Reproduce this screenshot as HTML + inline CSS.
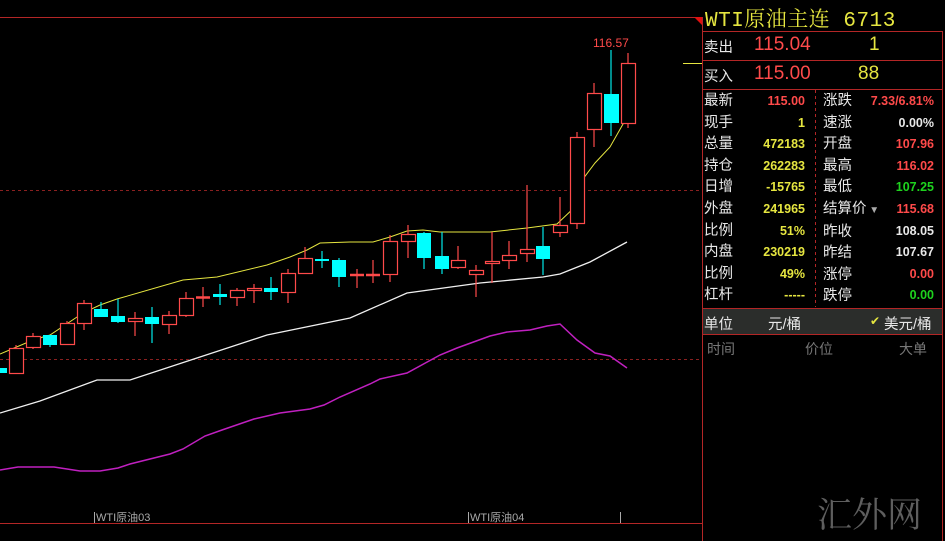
<!DOCTYPE html>
<html><head><meta charset="utf-8"><style>
body{margin:0;background:#000;width:945px;height:541px;overflow:hidden;position:relative;font-family:"Liberation Sans","Noto Sans CJK SC",sans-serif}
.a{position:absolute;white-space:nowrap}
.l{color:#e8e8e8;font-size:14.5px}
.v{font-size:12.5px;font-weight:bold;text-align:right}
.r{color:#ff4a4a}.y{color:#e6e640}.w{color:#e8e8e8}.g{color:#1ed21e}
</style></head><body>
<svg class="a" style="left:0;top:0" width="945" height="541">
<line x1="0" y1="17.5" x2="702" y2="17.5" stroke="#b32626"/>
<line x1="0" y1="523.5" x2="702" y2="523.5" stroke="#b32626"/>
<line x1="702.5" y1="17" x2="702.5" y2="541" stroke="#b32626"/>
<line x1="942.5" y1="31" x2="942.5" y2="541" stroke="#b32626"/>
<polygon points="694,17 702,17 702,25" fill="#e01010"/>
<line x1="0" y1="190.5" x2="702" y2="190.5" stroke="#8a2020" stroke-dasharray="3,3"/>
<line x1="0" y1="359.5" x2="702" y2="359.5" stroke="#8a2020" stroke-dasharray="3,3"/>
<line x1="683" y1="63.5" x2="702" y2="63.5" stroke="#e6e640"/>
<line x1="702" y1="31.5" x2="942" y2="31.5" stroke="#b32626"/>
<line x1="702" y1="60.5" x2="942" y2="60.5" stroke="#b32626"/>
<line x1="702" y1="89.5" x2="942" y2="89.5" stroke="#b32626"/>
<line x1="815.5" y1="90" x2="815.5" y2="307" stroke="#b32626" stroke-dasharray="3,3"/>
<rect x="703" y="309" width="239" height="25" fill="#2b2d2b"/>
<line x1="702" y1="308.5" x2="942" y2="308.5" stroke="#b32626"/>
<line x1="702" y1="334.5" x2="942" y2="334.5" stroke="#b32626"/>
<line x1="94.5" y1="512" x2="94.5" y2="523" stroke="#aaa"/>
<line x1="468.5" y1="512" x2="468.5" y2="523" stroke="#aaa"/>
<line x1="620.5" y1="512" x2="620.5" y2="523" stroke="#aaa"/>
<text x="96" y="521" fill="#aaa" font-size="11" font-family="Liberation Sans,Noto Sans CJK SC,sans-serif">WTI原油03</text>
<text x="470" y="521" fill="#aaa" font-size="11" font-family="Liberation Sans,Noto Sans CJK SC,sans-serif">WTI原油04</text>
<text x="593" y="47" fill="#ff4a4a" font-size="12" font-family="Liberation Sans,sans-serif">116.57</text>
<polyline fill="none" stroke="#f0f0f0" stroke-width="1.3" points="0,413 40,401 97,380 130,380 200,357 267,335 350,318 407,293 480,283 543,277 560,274 590,262 627,242"/>
<polyline fill="none" stroke="#c020c0" stroke-width="1.5" points="0,470 18,467 54,467 80,471 100,471 118,468 130,464 170,454 183,449 205,436 222,430 254,419 280,413 310,409 324,405 340,397 370,384 380,379 407,373 440,355 457,348 490,336 507,332 530,330 547,326 560,324 577,340 595,353 610,356 627,368"/>
<polyline fill="none" stroke="#e6e640" stroke-width="1" points="0,354 33,340 50,335 83,313 100,305 117,299 183,280 217,277 267,265 290,257 307,250 320,243 350,242 373,242 390,237 407,231 423,230 440,232 490,232 527,228 557,224 577,205 580,183 595,163 610,147 627,117"/>
<g stroke="#ff4a4a" fill="#000" stroke-width="1.2">
<line x1="16" y1="345" x2="16" y2="373"/><rect x="9.5" y="348.5" width="14" height="25"/>
<line x1="33" y1="333" x2="33" y2="349"/><rect x="26.5" y="336.5" width="14" height="11"/>
<line x1="67" y1="321" x2="67" y2="344"/><rect x="60.5" y="323.5" width="14" height="21"/>
<line x1="84" y1="300" x2="84" y2="330"/><rect x="77.5" y="303.5" width="14" height="20"/>
<line x1="135" y1="312" x2="135" y2="336"/><rect x="128.5" y="318.5" width="14" height="3"/>
<line x1="169" y1="311" x2="169" y2="334"/><rect x="162.5" y="315.5" width="14" height="9"/>
<line x1="186" y1="292" x2="186" y2="317"/><rect x="179.5" y="298.5" width="14" height="17"/>
<line x1="203" y1="287" x2="203" y2="307"/><line x1="196" y1="297.5" x2="210" y2="297.5" stroke-width="2.5"/>
<line x1="237" y1="288" x2="237" y2="306"/><rect x="230.5" y="290.5" width="14" height="7"/>
<line x1="254" y1="284" x2="254" y2="303"/><rect x="247.5" y="288.5" width="14" height="2"/>
<line x1="288" y1="269" x2="288" y2="303"/><rect x="281.5" y="273.5" width="14" height="19"/>
<line x1="305" y1="247" x2="305" y2="273"/><rect x="298.5" y="258.5" width="14" height="15"/>
<line x1="357" y1="269" x2="357" y2="288"/><line x1="350" y1="275" x2="364" y2="275" stroke-width="2.5"/>
<line x1="373" y1="260" x2="373" y2="283"/><line x1="366" y1="275" x2="380" y2="275" stroke-width="2.5"/>
<line x1="390" y1="235" x2="390" y2="282"/><rect x="383.5" y="241.5" width="14" height="33"/>
<line x1="408" y1="225" x2="408" y2="258"/><rect x="401.5" y="234.5" width="14" height="7"/>
<line x1="458" y1="246" x2="458" y2="269"/><rect x="451.5" y="260.5" width="14" height="7"/>
<line x1="476" y1="265" x2="476" y2="297"/><rect x="469.5" y="270.5" width="14" height="4"/>
<line x1="492" y1="232" x2="492" y2="283"/><rect x="485.5" y="261.5" width="14" height="2"/>
<line x1="509" y1="241" x2="509" y2="269"/><rect x="502.5" y="255.5" width="14" height="5"/>
<line x1="527" y1="185" x2="527" y2="262"/><rect x="520.5" y="249.5" width="14" height="4"/>
<line x1="560" y1="197" x2="560" y2="237"/><rect x="553.5" y="225.5" width="14" height="7"/>
<line x1="577" y1="132" x2="577" y2="229"/><rect x="570.5" y="137.5" width="14" height="86"/>
<line x1="594" y1="83" x2="594" y2="147"/><rect x="587.5" y="93.5" width="14" height="36"/>
<line x1="628" y1="53" x2="628" y2="128"/><rect x="621.5" y="63.5" width="14" height="60"/>
</g>
<g stroke="#00e8e8" fill="#00ffff" stroke-width="1.2">
<rect x="0" y="368" width="7" height="5" stroke="none"/>
<line x1="50" y1="335" x2="50" y2="347"/><rect x="43" y="335" width="14" height="10" stroke="none"/>
<line x1="101" y1="302" x2="101" y2="317"/><rect x="94" y="309" width="14" height="8" stroke="none"/>
<line x1="118" y1="299" x2="118" y2="323"/><rect x="111" y="316" width="14" height="6" stroke="none"/>
<line x1="152" y1="307" x2="152" y2="343"/><rect x="145" y="317" width="14" height="7" stroke="none"/>
<line x1="220" y1="284" x2="220" y2="305"/><rect x="213" y="294" width="14" height="3" stroke="none"/>
<line x1="271" y1="277" x2="271" y2="300"/><rect x="264" y="288" width="14" height="4" stroke="none"/>
<line x1="322" y1="251" x2="322" y2="268"/><rect x="315" y="259" width="14" height="2" stroke="none"/>
<line x1="339" y1="258" x2="339" y2="287"/><rect x="332" y="260" width="14" height="17" stroke="none"/>
<line x1="424" y1="232" x2="424" y2="269"/><rect x="417" y="233" width="14" height="25" stroke="none"/>
<line x1="442" y1="232" x2="442" y2="274"/><rect x="435" y="256" width="14" height="13" stroke="none"/>
<line x1="543" y1="227" x2="543" y2="275"/><rect x="536" y="246" width="14" height="13" stroke="none"/>
<line x1="611" y1="50" x2="611" y2="136"/><rect x="604" y="94" width="15" height="29" stroke="none"/>
</g>
</svg>
<div class="a" style="left:705px;top:3px;color:#e6e640;font-size:21px;font-family:'Liberation Mono','Noto Serif CJK SC',monospace;letter-spacing:0.5px">WTI原油主连 6713</div>
<div class="a l" style="left:704px;top:36px">卖出</div>
<div class="a r" style="left:754px;top:34px;font-size:19px">115.04</div>
<div class="a y" style="left:869px;top:34px;font-size:19px">1</div>
<div class="a l" style="left:704px;top:65px">买入</div>
<div class="a r" style="left:754px;top:63px;font-size:19px">115.00</div>
<div class="a y" style="left:858px;top:63px;font-size:19px">88</div>

<div class="a l" style="left:704px;top:91px;line-height:21.6px">最新<br>现手<br>总量<br>持仓<br>日增<br>外盘<br>比例<br>内盘<br>比例<br>杠杆</div>
<div class="a v" style="right:140px;top:91px;line-height:21.6px"><span class="r">115.00</span><br><span class="y">1</span><br><span class="y">472183</span><br><span class="y">262283</span><br><span class="y">-15765</span><br><span class="y">241965</span><br><span class="y">51%</span><br><span class="y">230219</span><br><span class="y">49%</span><br><span class="y">-----</span></div>
<div class="a l" style="left:823px;top:91px;line-height:21.6px">涨跌<br>速涨<br>开盘<br>最高<br>最低<br>结算价<span style="color:#aaa;font-size:10px"> ▼</span><br>昨收<br>昨结<br>涨停<br>跌停</div>
<div class="a v" style="right:11px;top:91px;line-height:21.6px"><span class="r">7.33/6.81%</span><br><span class="w">0.00%</span><br><span class="r">107.96</span><br><span class="r">116.02</span><br><span class="g">107.25</span><br><span class="r">115.68</span><br><span class="w">108.05</span><br><span class="w">107.67</span><br><span class="r">0.00</span><br><span class="g">0.00</span></div>

<div class="a l" style="left:704px;top:313px">单位</div>
<div class="a l" style="left:768px;top:313px">元/桶</div>
<div class="a" style="left:870px;top:314px;color:#e6e640;font-size:12px">✔</div>
<div class="a l" style="left:884px;top:313px">美元/桶</div>
<div class="a" style="left:707px;top:339px;color:#777;font-size:14px">时间</div>
<div class="a" style="left:805px;top:339px;color:#777;font-size:14px">价位</div>
<div class="a" style="left:899px;top:339px;color:#777;font-size:14px">大单</div>
<div class="a" style="left:817px;top:488px;color:#5e5e5e;font-size:35px;font-family:'Noto Serif CJK SC',serif">汇外网</div>
</body></html>
